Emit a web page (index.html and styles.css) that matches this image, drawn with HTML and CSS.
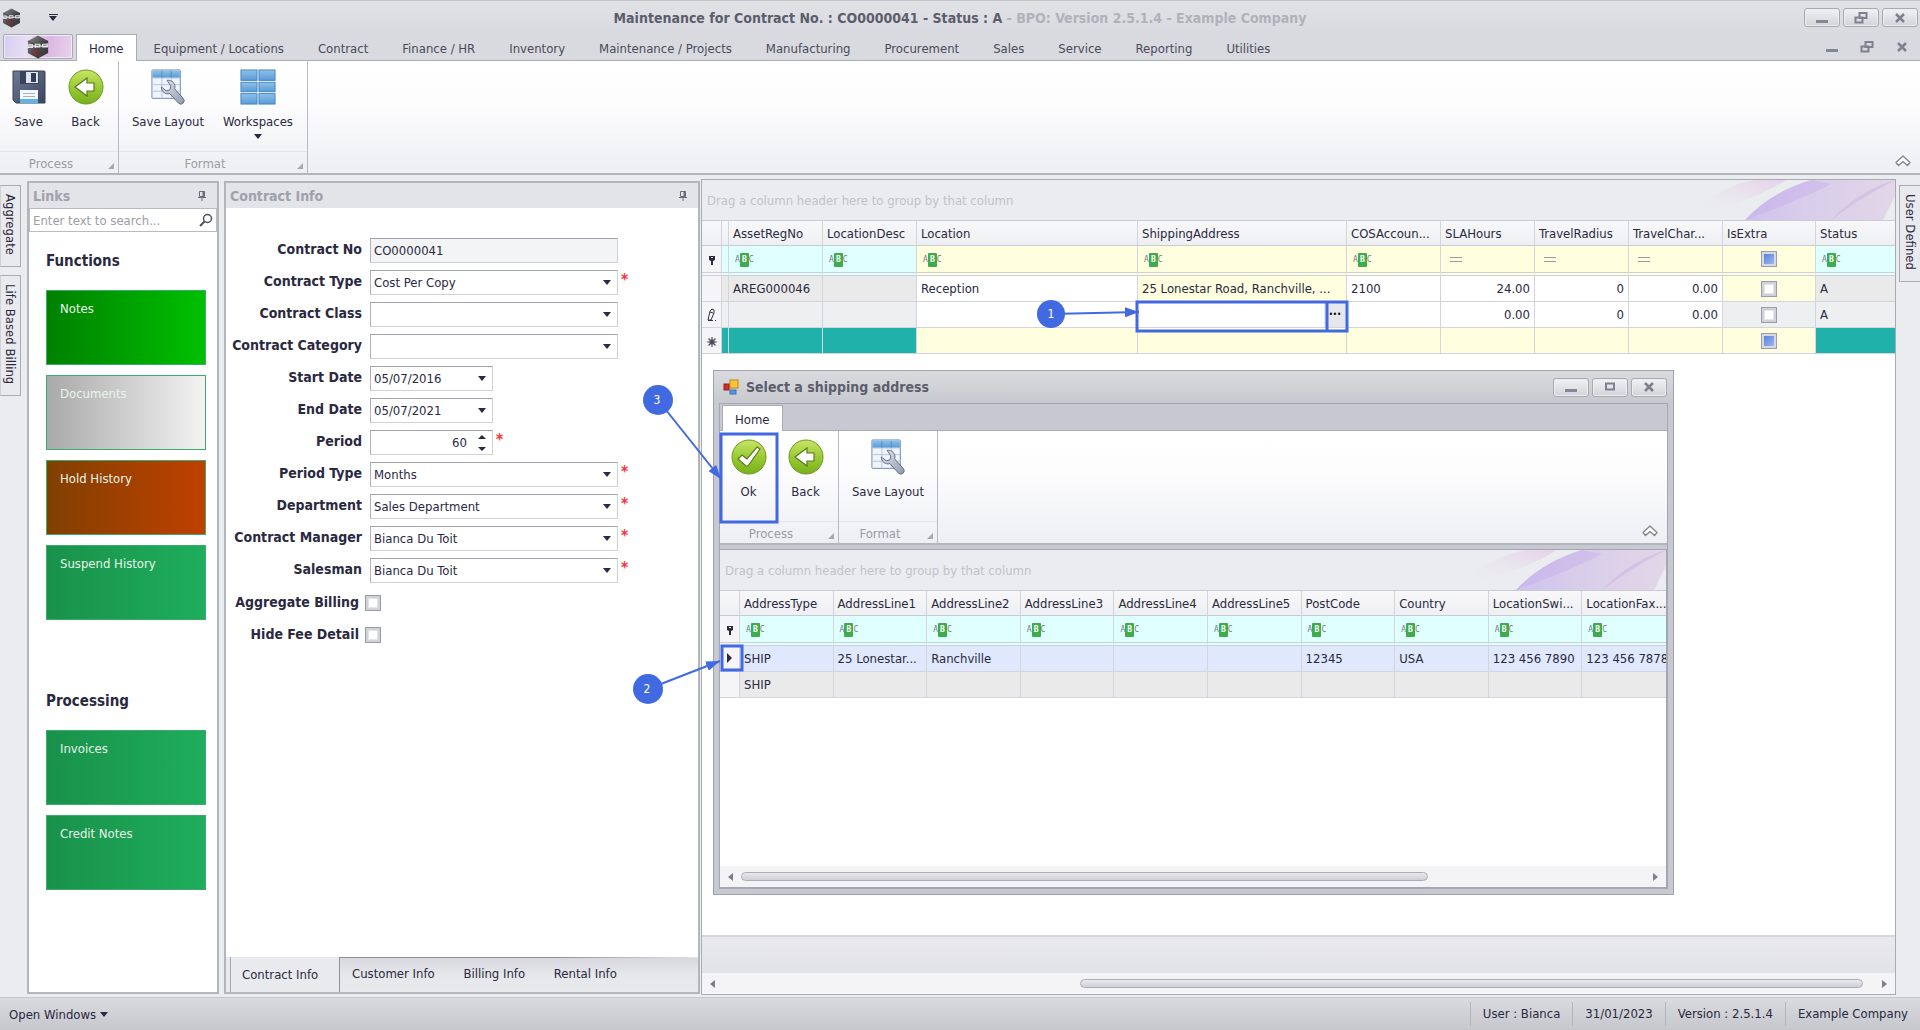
FILE: index.html
```html
<!DOCTYPE html>
<html lang="en">

<head>
  <meta charset="UTF-8">
  <meta name="viewport" content="width=device-width, initial-scale=1.0">
  <title>Maintenance for Contract No. : CO0000041</title>
  <link rel="stylesheet" href="styles.css">
</head>

<body>
  <!-- shared icons -->
  <svg class="sprite" aria-hidden="true">
    <defs>
      <linearGradient id="g-green" x1="0" y1="0" x2="0" y2="1">
        <stop offset="0" stop-color="#c9e468" />
        <stop offset="0.5" stop-color="#9acb32" />
        <stop offset="1" stop-color="#78b01c" />
      </linearGradient>
      <linearGradient id="g-blue" x1="0" y1="0" x2="0" y2="1">
        <stop offset="0" stop-color="#8fc1ea" />
        <stop offset="1" stop-color="#5a9bd6" />
      </linearGradient>
      <linearGradient id="g-floppy" x1="0" y1="0" x2="1" y2="1">
        <stop offset="0" stop-color="#6d7b95" />
        <stop offset="1" stop-color="#3d4560" />
      </linearGradient>
      <linearGradient id="g-steel" x1="0" y1="0" x2="1" y2="1">
        <stop offset="0" stop-color="#e4e8f0" />
        <stop offset="1" stop-color="#8e99ae" />
      </linearGradient>
      <linearGradient id="g-pink" x1="0" y1="1" x2="1" y2="0">
        <stop offset="0" stop-color="#ebecef" stop-opacity="0" />
        <stop offset="1" stop-color="#e6d0ea" />
      </linearGradient>
      <linearGradient id="g-violet" x1="0" y1="0" x2="1" y2="0">
        <stop offset="0" stop-color="#cdc2ee" />
        <stop offset="0.4" stop-color="#d8cdea" />
        <stop offset="1" stop-color="#e2d6e8" />
      </linearGradient>
      <linearGradient id="g-hex" x1="0" y1="0" x2="1" y2="1">
        <stop offset="0" stop-color="#8a8a8c" />
        <stop offset="0.5" stop-color="#4b4b4e" />
        <stop offset="1" stop-color="#333336" />
      </linearGradient>
    </defs>
    <symbol id="i-logo" viewBox="0 0 24 26">
      <path d="M12 0.5 23 6.5V19.5L12 25.5 1 19.5V6.5Z" fill="url(#g-hex)" />
      <path d="M1 6.5 12 12 23 6.5M12 12V25" stroke="#2c2c2f" fill="none" opacity="0.6" />
      <path d="M1 9.5v4h5v-3H2M9 14v-4h5v3H9M22 10h-5v3h5v-4M1 12h22" stroke="#e8e8e8" stroke-width="1.2" fill="none" />
      <circle cx="9.5" cy="18.5" r="2.5" stroke="#b3202a" fill="none" />
      <path d="m11 20 2 2" stroke="#b3202a" />
    </symbol>
    <symbol id="i-save" viewBox="0 0 36 36">
      <path d="M2 2h31a1 1 0 0 1 1 1v31H5l-3-3Z" fill="url(#g-floppy)" stroke="#39415a" />
      <path d="M9 2h19v13H9Z" fill="#39435e" />
      <path d="M15 3h12v11H15Z" fill="#dfe4ee" />
      <path d="M20 4h5v9h-5Z" fill="#343c55" />
      <path d="M9 21h18v13H9Z" fill="#f4f7fb" />
      <path d="M9 30h18v4H9Z" fill="#5fb3e8" />
      <path d="M12 24.5h12M12 27.5h12" stroke="#a9b1c1" />
    </symbol>
    <symbol id="i-back" viewBox="0 0 36 36">
      <circle cx="18" cy="18" r="17" fill="url(#g-green)" stroke="#6b9a1b" />
      <path d="M7 18 19 9v5h7v8h-7v5Z" fill="#fff" stroke="#59791d" stroke-width="1.2" />
    </symbol>
    <symbol id="i-ok" viewBox="0 0 36 36">
      <circle cx="18" cy="18" r="17" fill="url(#g-green)" stroke="#6b9a1b" />
      <path d="m7 20 4-4 5 4L26 8l3 2-12 17h-2Z" fill="#fff" stroke="#59791d" stroke-width="1.2" />
    </symbol>
    <symbol id="i-layout" viewBox="0 0 36 38">
      <rect x="1" y="1" width="30" height="30" rx="1" fill="#f0f4fb" stroke="#6a87b6" />
      <path d="M1 9.5h30M1 16.5h30M1 23.5h30M11.5 1v30M21.5 1v30" stroke="#b5c4df" />
      <path d="M1.5 1.5h29V9h-29Z" fill="url(#g-blue)" />
      <path d="M11.5 2v7M21.5 2v7" stroke="#4f8dc8" />
      <path d="M17 12a7 7 0 0 1 8 9l9 10a3 3 0 0 1-5 5l-9-10a7 7 0 0 1-9-7l5 4 4-1 1-4Z" fill="url(#g-steel)" stroke="#5f6a82" />
    </symbol>
    <symbol id="i-tiles" viewBox="0 0 38 38">
      <g fill="url(#g-blue)" stroke="#4384c2">
        <rect x="1" y="1" width="17" height="11" /><rect x="20" y="1" width="17" height="11" />
        <rect x="1" y="14" width="17" height="10" /><rect x="20" y="14" width="17" height="10" />
        <rect x="1" y="26" width="17" height="11" /><rect x="20" y="26" width="17" height="11" />
      </g>
    </symbol>
    <symbol id="i-min" viewBox="0 0 14 12"><path d="M1 8h12v3H1Z" fill="#84869a" /></symbol>
    <symbol id="i-restore" viewBox="0 0 14 12">
      <path d="M5.5 1h7v5h-7ZM1.5 5.5h7v5h-7Z" fill="none" stroke="#7d8090" stroke-width="2" />
    </symbol>
    <symbol id="i-max" viewBox="0 0 14 12"><path d="M3 2.5h8v6H3Z" fill="none" stroke="#7d8090" stroke-width="2" /></symbol>
    <symbol id="i-close" viewBox="0 0 14 12"><path d="m3 2 8 8M11 2l-8 8" stroke="#7d8090" stroke-width="2.5" /></symbol>
    <symbol id="i-pin" viewBox="0 0 10 12">
      <path d="M2.5 1.5h5v5h-5ZM1 7.5h8M5 8v3" fill="none" stroke="#6b6d7d" />
      <path d="M5.5 1h2v6h-2Z" fill="#6b6d7d" />
    </symbol>
    <symbol id="i-search" viewBox="0 0 14 14">
      <circle cx="8.5" cy="5.5" r="4" fill="none" stroke="#4d4f5e" stroke-width="1.5" />
      <path d="M5.5 8.5 1 13" stroke="#4d4f5e" stroke-width="2" />
    </symbol>
    <symbol id="i-collapse" viewBox="0 0 16 12">
      <path d="M8 1 15 7.5 12.5 10.5 8 6.5 3.5 10.5 1 7.5Z" fill="#fff" stroke="#84868f" stroke-width="1.4" stroke-linejoin="round" />
    </symbol>
    <symbol id="i-filter" viewBox="0 0 10 10">
      <path d="M2 1h6v4L6 6v4H4V6L2 5Z" fill="#2b2b3f" /><path d="M4 2.5h2" stroke="#fff" />
    </symbol>
    <symbol id="i-edit" viewBox="0 0 10 14">
      <path d="M1 12 3 3l2-2 2 1v3L4 12ZM3 4l3 1" fill="none" stroke="#33343f" /><path d="M1 12.500h5M8 12.500h1" stroke="#33343f" />
    </symbol>
    <symbol id="i-new" viewBox="0 0 10 10">
      <path d="M5 0v10M0 5h10M1.500 1.500l7 7M8.500 1.500l-7 7" stroke="#4d4e5c" stroke-width="1.2" /><circle cx="5" cy="5" r="2.5" fill="#4d4e5c" />
    </symbol>
    <symbol id="i-form" viewBox="0 0 16 16">
      <rect x="7" y="1" width="8" height="8" fill="#ffc52e" stroke="#b9851a" />
      <rect x="1" y="5" width="5" height="6" fill="#d02f25" stroke="#96211a" />
      <rect x="7" y="11" width="6" height="4" fill="#5a94e0" stroke="#3a70bd" />
    </symbol>
    <symbol id="i-petals" viewBox="0 0 240 40">
      <path d="M38 32Q70 4 100 0h31Q90 26 38 32Z" fill="url(#g-pink)" />
      <path d="M90 40Q116 12 156 0h84v16l-12 24Z" fill="url(#g-violet)" />
      <path d="M90 40Q116 12 156 0l20 4Q150 18 90 40Z" fill="#c3abeb" opacity="0.4" />
      <path d="M176 40Q205 10 240 0 205 18 176 40Z" fill="#c9a8dd" opacity="0.4" />
    </symbol>
  </svg>

  <header class="titlebar">
    <div class="title-left">
      <svg class="logo-small"><use href="#i-logo" /></svg>
      <span class="quick-arrow"></span>
    </div>
    <h1 class="title">Maintenance for Contract No. : CO0000041 - Status : A <span>- BPO: Version 2.5.1.4 - Example Company</span></h1>
    <div class="window-buttons">
      <button aria-label="Minimize"><svg><use href="#i-min" /></svg></button>
      <button aria-label="Restore"><svg><use href="#i-restore" /></svg></button>
      <button aria-label="Close"><svg><use href="#i-close" /></svg></button>
    </div>
  </header>

  <nav class="menu">
    <button class="app-button" aria-label="Application menu"><svg><use href="#i-logo" /></svg></button>
    <a class="menu-item is-active" href="#">Home</a>
    <a class="menu-item" href="#">Equipment / Locations</a>
    <a class="menu-item" href="#">Contract</a>
    <a class="menu-item" href="#">Finance / HR</a>
    <a class="menu-item" href="#">Inventory</a>
    <a class="menu-item" href="#">Maintenance / Projects</a>
    <a class="menu-item" href="#">Manufacturing</a>
    <a class="menu-item" href="#">Procurement</a>
    <a class="menu-item" href="#">Sales</a>
    <a class="menu-item" href="#">Service</a>
    <a class="menu-item" href="#">Reporting</a>
    <a class="menu-item" href="#">Utilities</a>
    <div class="child-buttons">
      <button aria-label="Minimize child"><svg><use href="#i-min" /></svg></button>
      <button aria-label="Restore child"><svg><use href="#i-restore" /></svg></button>
      <button aria-label="Close child"><svg><use href="#i-close" /></svg></button>
    </div>
  </nav>

  <section class="ribbon">
    <div class="ribbon-group">
      <div class="ribbon-items">
        <button class="ribbon-button"><svg><use href="#i-save" /></svg>Save</button>
        <button class="ribbon-button"><svg><use href="#i-back" /></svg>Back</button>
      </div>
      <div class="ribbon-caption">Process</div>
    </div>
    <div class="ribbon-group">
      <div class="ribbon-items roomy">
        <button class="ribbon-button wide"><svg><use href="#i-layout" /></svg>Save Layout</button>
        <button class="ribbon-button wide"><svg><use href="#i-tiles" /></svg>Workspaces<i class="caret"></i></button>
      </div>
      <div class="ribbon-caption">Format</div>
    </div>
    <button class="collapse" aria-label="Collapse ribbon"><svg><use href="#i-collapse" /></svg></button>
  </section>

  <main class="workspace">
    <div class="rail">
      <button class="rail-tab">Aggregate</button>
      <button class="rail-tab">Life Based Billing</button>
    </div>

    <aside class="panel links">
      <div class="panel-header">Links <svg><use href="#i-pin" /></svg></div>
      <div class="search">
        <input type="text" placeholder="Enter text to search..." aria-label="Search links">
        <svg><use href="#i-search" /></svg>
      </div>
      <div class="tiles">
        <h2>Functions</h2>
        <button class="tile notes">Notes</button>
        <button class="tile documents">Documents</button>
        <button class="tile hold">Hold History</button>
        <button class="tile">Suspend History</button>
      </div>
      <div class="tiles">
        <h2>Processing</h2>
        <button class="tile">Invoices</button>
        <button class="tile">Credit Notes</button>
      </div>
    </aside>

    <section class="panel contract">
      <div class="panel-header">Contract Info <svg><use href="#i-pin" /></svg></div>
      <form class="form">
        <label for="no">Contract No</label>
        <div class="field"><input id="no" type="text" value="CO0000041" readonly></div>
        <label for="type">Contract Type</label>
        <div class="field drop required"><select id="type"><option>Cost Per Copy</option></select></div>
        <label for="class">Contract Class</label>
        <div class="field drop"><select id="class"><option></option></select></div>
        <label for="category">Contract Category</label>
        <div class="field drop"><select id="category"><option></option></select></div>
        <label for="start">Start Date</label>
        <div class="field drop short"><input id="start" type="text" value="05/07/2016"></div>
        <label for="end">End Date</label>
        <div class="field drop short"><input id="end" type="text" value="05/07/2021"></div>
        <label for="period">Period</label>
        <div class="field drop spin short required"><input id="period" type="text" value="60"></div>
        <label for="ptype">Period Type</label>
        <div class="field drop required"><select id="ptype"><option>Months</option></select></div>
        <label for="dept">Department</label>
        <div class="field drop required"><select id="dept"><option>Sales Department</option></select></div>
        <label for="manager">Contract Manager</label>
        <div class="field drop required"><select id="manager"><option>Bianca Du Toit</option></select></div>
        <label for="salesman">Salesman</label>
        <div class="field drop required"><select id="salesman"><option>Bianca Du Toit</option></select></div>
        <div class="check-row"><label for="aggregate">Aggregate Billing</label><input id="aggregate" type="checkbox"></div>
        <div class="check-row"><label for="hidefee">Hide Fee Detail</label><input id="hidefee" type="checkbox"></div>
      </form>
      <div class="bottom-tabs">
        <button class="is-active">Contract Info</button>
        <div class="rest">
          <button>Customer Info</button>
          <button>Billing Info</button>
          <button>Rental Info</button>
        </div>
      </div>
    </section>

    <section class="grid">
      <div class="group-bar">Drag a column header here to group by that column<svg><use href="#i-petals" /></svg></div>
      <table class="table">
        <colgroup>
          <col class="c-ind"><col class="c-thin"><col class="c-std"><col class="c-std"><col class="c-loc"><col class="c-ship">
          <col class="c-std"><col class="c-std"><col class="c-std"><col class="c-std"><col class="c-extra"><col>
        </colgroup>
        <thead>
          <tr>
            <th></th><th></th><th>AssetRegNo</th><th>LocationDesc</th><th>Location</th><th>ShippingAddress</th>
            <th>COSAccoun...</th><th>SLAHours</th><th>TravelRadius</th><th>TravelChar...</th><th>IsExtra</th><th>Status</th>
          </tr>
          <tr class="filter">
            <td class="ind"><svg><use href="#i-filter" /></svg></td>
            <td></td>
            <td><span class="abc">A<b>B</b>C</span></td>
            <td><span class="abc">A<b>B</b>C</span></td>
            <td class="yellow"><span class="abc">A<b>B</b>C</span></td>
            <td class="yellow"><span class="abc">A<b>B</b>C</span></td>
            <td class="yellow"><span class="abc">A<b>B</b>C</span></td>
            <td class="yellow"><span class="eq"></span></td>
            <td class="yellow"><span class="eq"></span></td>
            <td class="yellow"><span class="eq"></span></td>
            <td class="yellow center"><input class="mixed" type="checkbox" aria-label="Filter IsExtra"></td>
            <td><span class="abc">A<b>B</b>C</span></td>
          </tr>
        </thead>
        <tbody>
          <tr>
            <td class="ind"></td><td class="grey"></td><td class="grey">AREG000046</td><td class="grey"></td>
            <td>Reception</td><td class="yellow">25 Lonestar Road, Ranchville, ...</td><td>2100</td>
            <td class="num">24.00</td><td class="num">0</td><td class="num">0.00</td>
            <td class="yellow center"><input type="checkbox" aria-label="IsExtra"></td><td class="grey">A</td>
          </tr>
          <tr>
            <td class="ind"><svg class="tall"><use href="#i-edit" /></svg></td><td class="pale"></td><td class="pale"></td><td class="pale"></td>
            <td></td>
            <td class="editing"><div><input type="text" aria-label="ShippingAddress"><button aria-label="Choose address">•••</button></div></td>
            <td></td><td class="num">0.00</td><td class="num">0</td><td class="num">0.00</td>
            <td class="pale center"><input type="checkbox" aria-label="IsExtra"></td><td class="pale">A</td>
          </tr>
          <tr>
            <td class="ind"><svg><use href="#i-new" /></svg></td><td class="teal"></td><td class="teal"></td><td class="teal"></td>
            <td class="yellow"></td><td class="yellow"></td><td class="yellow"></td><td class="yellow"></td><td class="yellow"></td><td class="yellow"></td>
            <td class="yellow center"><input class="mixed" type="checkbox" aria-label="IsExtra"></td><td class="teal"></td>
          </tr>
        </tbody>
      </table>
      <div class="grid-space"></div>
      <div class="grid-footer"></div>
      <div class="scrollbar main-scroll"><i class="left"></i><span class="track"><b></b></span><i class="right"></i></div>

      <section class="dialog" role="dialog" aria-label="Select a shipping address">
        <header class="dialog-title">
          <svg class="form-icon"><use href="#i-form" /></svg>
          <h2>Select a shipping address</h2>
          <div class="window-buttons">
            <button aria-label="Minimize dialog"><svg><use href="#i-min" /></svg></button>
            <button aria-label="Maximize dialog"><svg><use href="#i-max" /></svg></button>
            <button aria-label="Close dialog"><svg><use href="#i-close" /></svg></button>
          </div>
        </header>
        <div class="dialog-body">
          <nav class="dialog-menu"><a class="menu-item is-active" href="#">Home</a></nav>
          <div class="ribbon">
            <div class="ribbon-group">
              <div class="ribbon-items">
                <button class="ribbon-button"><svg><use href="#i-ok" /></svg>Ok</button>
                <button class="ribbon-button"><svg><use href="#i-back" /></svg>Back</button>
              </div>
              <div class="ribbon-caption">Process</div>
            </div>
            <div class="ribbon-group">
              <div class="ribbon-items roomy">
                <button class="ribbon-button wide"><svg><use href="#i-layout" /></svg>Save Layout</button>
              </div>
              <div class="ribbon-caption">Format</div>
            </div>
            <button class="collapse" aria-label="Collapse dialog ribbon"><svg><use href="#i-collapse" /></svg></button>
          </div>
          <div class="dialog-grid">
            <div class="group-bar">Drag a column header here to group by that column<svg><use href="#i-petals" /></svg></div>
            <div class="clip">
              <table class="table addresses">
                <colgroup>
                  <col class="c-ind"><col><col><col><col><col><col><col><col><col><col>
                </colgroup>
                <thead>
                  <tr>
                    <th></th><th>AddressType</th><th>AddressLine1</th><th>AddressLine2</th><th>AddressLine3</th><th>AddressLine4</th>
                    <th>AddressLine5</th><th>PostCode</th><th>Country</th><th>LocationSwi...</th><th>LocationFax...</th>
                  </tr>
                  <tr class="filter">
                    <td class="ind"><svg><use href="#i-filter" /></svg></td>
                    <td><span class="abc">A<b>B</b>C</span></td>
                    <td><span class="abc">A<b>B</b>C</span></td>
                    <td><span class="abc">A<b>B</b>C</span></td>
                    <td><span class="abc">A<b>B</b>C</span></td>
                    <td><span class="abc">A<b>B</b>C</span></td>
                    <td><span class="abc">A<b>B</b>C</span></td>
                    <td><span class="abc">A<b>B</b>C</span></td>
                    <td><span class="abc">A<b>B</b>C</span></td>
                    <td><span class="abc">A<b>B</b>C</span></td>
                    <td><span class="abc">A<b>B</b>C</span></td>
                  </tr>
                </thead>
                <tbody>
                  <tr class="selected">
                    <td class="ind"><i class="row-arrow"></i></td><td>SHIP</td><td>25 Lonestar...</td><td>Ranchville</td><td></td><td></td>
                    <td></td><td>12345</td><td>USA</td><td>123 456 7890</td><td>123 456 7878</td>
                  </tr>
                  <tr class="muted">
                    <td class="ind"></td><td>SHIP</td><td></td><td></td><td></td><td></td><td></td><td></td><td></td><td></td><td></td>
                  </tr>
                </tbody>
              </table>
            </div>
            <div class="grid-space"></div>
            <div class="scrollbar"><i class="left"></i><span class="track"><b></b></span><i class="right"></i></div>
          </div>
        </div>
      </section>

    </section>

    <div class="rail rail-right">
      <button class="rail-tab">User Defined</button>
    </div>
  </main>

  <footer class="status">
    <button class="open-windows">Open Windows <i class="caret"></i></button>
    <span>User : Bianca</span>
    <span>31/01/2023</span>
    <span>Version : 2.5.1.4</span>
    <span>Example Company</span>
  </footer>

  <!-- numbered steps drawn over the window -->
  <svg class="steps" width="1920" height="1030">
    <defs>
      <marker id="arrow" viewBox="0 0 14 10" refX="14" refY="5" markerWidth="14" markerHeight="10" markerUnits="userSpaceOnUse" orient="auto">
        <path d="M0 0 14 5 0 10Z" fill="#4169e1" />
      </marker>
    </defs>
    <g fill="none" stroke="#4169e1" stroke-width="3">
      <rect x="1137" y="302" width="210" height="29" />
      <path d="M1327 303v27" />
      <rect x="721" y="434" width="56" height="88" />
      <rect x="722" y="646" width="20" height="24" />
    </g>
    <g stroke="#4169e1" stroke-width="2">
      <path d="M1051 314 1139 312" marker-end="url(#arrow)" />
      <path d="M658 400 721 479" marker-end="url(#arrow)" />
      <path d="M648 689 720 661" marker-end="url(#arrow)" />
    </g>
    <g fill="#4169e1">
      <circle cx="1051" cy="314" r="14" />
      <circle cx="658" cy="400" r="15" />
      <circle cx="648" cy="689" r="15" />
    </g>
    <g fill="#fff" text-anchor="middle">
      <text x="1051" y="318">1</text>
      <text x="657" y="404">3</text>
      <text x="647" y="693">2</text>
    </g>
  </svg>
</body>

</html>
```

FILE: styles.css
```css
* {
  margin: 0;
  padding: 0;
  box-sizing: border-box;
}

body {
  position: relative;
  display: flex;
  flex-direction: column;
  height: 100vh;
  overflow: hidden;
  background: #ebecf0;
  color: #2a2940;
  font-family: "DejaVu Sans Condensed", Tahoma, sans-serif;
  font-size: 13px;
}

button,
input,
select {
  border: 0;
  background: none;
  color: inherit;
  font: inherit;
}

a {
  color: inherit;
  text-decoration: none;
}

.sprite {
  position: absolute;
  width: 0;
  height: 0;
}

/* title bar */
.titlebar {
  display: grid;
  grid-template-columns: 1fr auto 1fr;
  align-items: center;
  height: 34px;
  padding: 0 2px;
  border-top: 1px solid #c3c4ca;
  background: linear-gradient(#e1e2e6, #d9dadf);
}

.title-left {
  display: flex;
  align-items: center;
  gap: 28px;
}

.logo-small {
  width: 19px;
  height: 20px;
}

.quick-arrow {
  width: 9px;
  height: 7px;
  border-top: 1px solid #2a2940;
}

.quick-arrow::after,
.caret {
  content: '';
  display: block;
  width: 0;
  border: 4px solid transparent;
  border-top: 5px solid #2a2940;
  border-bottom: 0;
}

.quick-arrow::after {
  margin-top: 1px;
}

.title {
  color: #5c5d6c;
  font-size: 14px;
}

.title span {
  color: #b0b1ba;
}

.window-buttons {
  display: flex;
  justify-self: end;
  gap: 3px;
}

.window-buttons button {
  display: flex;
  align-items: center;
  justify-content: center;
  width: 36px;
  height: 19px;
  border: 1px solid #a8aab3;
  border-radius: 3px;
  background: linear-gradient(#f0f1f3, #d3d4d9);
  box-shadow: inset 0 0 0 1px #eceded;
}

.window-buttons svg,
.child-buttons svg {
  display: block;
  width: 14px;
  height: 12px;
}

/* menu */
.menu {
  display: flex;
  height: 27px;
  border-bottom: 1px solid #a9acb5;
  background: #d9dadf;
}

.app-button {
  width: 70px;
  height: 25px;
  margin: 0 3px;
  border: 1px solid #a8a9b5;
  border-radius: 2px;
  background: linear-gradient(100deg, #d5cdf3, #e9dff2 35%, #dcb8e2 65%, #e6d3ea);
  box-shadow: inset 0 0 0 1px #f0eaf6;
}

.app-button svg {
  display: block;
  width: 24px;
  height: 24px;
  margin: auto;
}

.menu-item {
  padding: 0 17px;
  color: #4a4a5c;
  line-height: 29px;
}

.menu-item.is-active {
  height: 27px;
  padding: 0 12px;
  border: 1px solid #a9acb5;
  border-bottom: 0;
  background: #fff;
  color: #2a2940;
  line-height: 27px;
}

.child-buttons {
  display: flex;
  align-items: center;
  gap: 21px;
  margin: 0 11px 0 auto;
}

/* ribbon */
.ribbon {
  display: flex;
  height: 114px;
  border-bottom: 2px solid #b3b5bd;
  background: linear-gradient(#fff, #fdfdfe 35%, #eeeff3);
}

.ribbon-group {
  display: flex;
  flex-direction: column;
  border-right: 1px solid #b8bac3;
}

.ribbon-items {
  display: flex;
  flex: 1;
  padding-right: 4px;
}

.ribbon-items.roomy {
  padding-left: 4px;
}

.ribbon-button {
  display: flex;
  flex-direction: column;
  align-items: center;
  width: 57px;
  padding-top: 8px;
  line-height: 17px;
}

.ribbon-button.wide {
  width: 90px;
}

.ribbon-button svg {
  width: 36px;
  height: 36px;
  margin-bottom: 8px;
}

.ribbon-button .caret {
  margin-top: 4px;
}

.ribbon-caption {
  position: relative;
  height: 22px;
  padding-right: 16px;
  border-top: 1px solid #e3e4e8;
  color: #9a9ba6;
  line-height: 23px;
  text-align: center;
}

.ribbon-caption::after {
  content: '';
  position: absolute;
  right: 4px;
  bottom: 4px;
  border: 3px solid #a7a8af;
  border-top-color: transparent;
  border-left-color: transparent;
}

.collapse {
  align-self: flex-end;
  margin: 0 9px 6px auto;
}

.collapse svg {
  display: block;
  width: 16px;
  height: 12px;
}

/* main area */
.workspace {
  display: flex;
  flex: 1;
  min-height: 0;
}

.rail {
  display: flex;
  flex-direction: column;
  gap: 8px;
  width: 22px;
  margin-right: 5px;
  padding-top: 10px;
}

.rail-right {
  width: 21px;
  margin: 0 0 0 3px;
}

.rail-tab {
  width: 21px;
  padding: 8px 0 11px;
  border: 1px solid #a9abb4;
  border-left-color: #d0d1d8;
  background: #e9eaee;
  line-height: 19px;
  writing-mode: vertical-rl;
}

.rail-right .rail-tab {
  border-left-color: #a9abb4;
  border-right: 0;
}

.panel {
  display: flex;
  flex-direction: column;
  margin: 6px 5px 3px 0;
  border: 2px solid #b3b5bd;
  background: #fff;
}

.panel-header {
  display: flex;
  align-items: center;
  justify-content: space-between;
  height: 25px;
  padding: 0 10px 0 4px;
  background: #e3e4e8;
  color: #a0a1ad;
  font-size: 14px;
  font-weight: bold;
}

.panel-header svg {
  width: 10px;
  height: 12px;
}

.links {
  width: 192px;
}

.search {
  display: flex;
  align-items: center;
  height: 24px;
  padding-right: 3px;
  border: 1px solid #b9bac3;
}

.search input {
  flex: 1;
  min-width: 0;
  padding-left: 3px;
}

.search input::placeholder {
  color: #9c9da9;
}

.search svg {
  width: 14px;
  height: 14px;
}

.tiles {
  display: flex;
  flex-direction: column;
  gap: 10px;
  padding: 19px 11px 52px 17px;
}

.tiles h2 {
  margin-bottom: 9px;
  font-size: 15px;
  line-height: 20px;
}

.tile {
  display: flex;
  height: 75px;
  padding: 9px 13px;
  border: 1px solid #3cab6c;
  background: linear-gradient(90deg, #19914a, #1eae5c);
  color: #e9f5ec;
  line-height: 18px;
}

.notes {
  background: linear-gradient(90deg, #008000, #00c000);
}

.documents {
  background: linear-gradient(90deg, #a9a9a9, #f3f3f3);
}

.hold {
  background: linear-gradient(90deg, #804000, #c04000);
}

/* contract form */
.contract {
  width: 476px;
  margin-right: 1px;
}

.form {
  display: grid;
  grid-template-columns: 136px 1fr;
  column-gap: 8px;
  row-gap: 7px;
  align-content: start;
  flex: 1;
  padding-top: 30px;
}

.form label {
  font-size: 14px;
  font-weight: bold;
  line-height: 23px;
  text-align: right;
  white-space: nowrap;
}

.field {
  position: relative;
  width: 248px;
  height: 25px;
}

.field.short {
  width: 123px;
}

.field input,
.field select {
  width: 100%;
  height: 25px;
  padding: 0 3px;
  border: 1px solid #cfd0d8;
  border-top-color: #9fa1ad;
  border-left-color: #b0b2bc;
  background: #fff;
  appearance: none;
}

.field input[readonly] {
  background: #f3f4f6;
}

.drop::before {
  content: '';
  position: absolute;
  top: 10px;
  right: 7px;
  border: 4px solid transparent;
  border-top: 5px solid #2a2940;
  border-bottom: 0;
}

.spin input {
  padding-right: 25px;
  text-align: right;
}

/* up and down arrows in one shape */
.spin::before {
  top: 5px;
  width: 8px;
  height: 16px;
  border: 0;
  background: #2a2940;
  clip-path: polygon(50% 0, 100% 4px, 0 4px, 50% 0, 0 12px, 100% 12px, 50% 100%, 0 12px);
}

.required::after {
  content: '*';
  position: absolute;
  top: 1px;
  left: calc(100% + 3px);
  color: #f33;
  font-size: 15px;
  font-weight: bold;
}

.check-row {
  display: flex;
  grid-column: 1 / 3;
  align-items: center;
  gap: 6px;
  height: 25px;
}

.check-row label {
  width: 133px;
}

input[type="checkbox"] {
  width: 16px;
  height: 16px;
  border: 1px solid #9a9ca9;
  background: #fff;
  box-shadow: inset 0 0 0 2px #d0d1d9, inset 0 0 0 3px #e4e5ea;
  appearance: none;
}

input[type="checkbox"].mixed {
  background: linear-gradient(135deg, #4a78d8, #a8c2f5);
  box-shadow: inset 0 0 0 2px #d9dae1;
}

.bottom-tabs {
  display: flex;
  height: 35px;
  padding-left: 4px;
  background: #e9eaee;
}

.bottom-tabs button {
  padding: 0 13px 0 12px;
  line-height: 32px;
}

.bottom-tabs .is-active {
  width: 109px;
  padding: 0 0 0 11px;
  border-left: 1px solid #a9abb4;
  text-align: left;
}

.bottom-tabs .rest {
  flex: 1;
  border: 1px solid;
  border-image: linear-gradient(100deg, #8f919b 60%, #e9eaee) 1;
  border-right: 0;
  border-bottom: 0;
  background: linear-gradient(#d7d8dd, #e6e7eb 50%, #e9eaee);
}

/* data grid */
.grid {
  position: relative;
  display: flex;
  flex: 1;
  flex-direction: column;
  min-width: 0;
  margin: 4px 0 2px;
  border: 1px solid #a9abb4;
  background: #fff;
}

.group-bar {
  display: flex;
  align-items: center;
  justify-content: space-between;
  height: 40px;
  padding-left: 5px;
  background: #ebecef;
  color: #c1c2cb;
}

.group-bar svg {
  width: 240px;
  height: 40px;
}

.table {
  width: 100%;
  border-spacing: 0;
  table-layout: fixed;
}

.c-ind {
  width: 20px;
}

.c-thin {
  width: 7px;
}

.c-std {
  width: 94px;
}

.c-extra {
  width: 93px;
}

.c-loc {
  width: 221px;
}

.c-ship {
  width: 209px;
}

.table th,
.table td {
  height: 26px;
  padding: 0 4px;
  border-right: 1px solid #d4d5dc;
  border-bottom: 1px solid #d4d5dc;
  font-weight: normal;
  text-align: left;
  white-space: nowrap;
}

.table th {
  border-top: 1px solid #c9cad2;
  border-bottom-color: #c9cad2;
  background: linear-gradient(#f8f8fa, #eeeff2);
}

.table tr > :last-child {
  border-right: 0;
}

.table .filter td {
  height: 30px;
  border-bottom: 4px double #cfd0d7;
  background: #e0ffff;
}

.table .ind,
.table .filter .ind {
  padding: 0;
  background: #f5f5f8;
  text-align: center;
}

.ind svg {
  width: 10px;
  height: 10px;
  vertical-align: middle;
}

.ind .tall {
  height: 14px;
}

.table .yellow,
.table .filter .yellow {
  background: #ffffe0;
}

.table .grey,
.muted td {
  background: #eaeaea;
}

.table .pale {
  background: #eeeff1;
}

.table .teal {
  background: #20b2aa;
}

.table .num {
  text-align: right;
}

.table .center {
  text-align: center;
}

.center input {
  vertical-align: middle;
}

.selected td {
  background: #e0e8fd;
}

.row-arrow {
  display: inline-block;
  border: 5px solid transparent;
  border-left-color: #2a2940;
  border-right: 0;
}

.abc {
  display: inline-flex;
  align-items: center;
  margin-left: 2px;
  color: #76777f;
  font-family: "DejaVu Sans Mono", monospace;
  font-size: 8px;
  vertical-align: middle;
}

.abc b {
  width: 9px;
  border-radius: 1px;
  background: #3fac4b;
  color: #fff;
  line-height: 14px;
  text-align: center;
}

.eq {
  display: block;
  width: 12px;
  height: 5px;
  margin-left: 5px;
  border: 1px solid #9a9ba3;
  border-right: 0;
  border-left: 0;
}

.table .editing {
  padding: 0;
}

.editing div {
  display: flex;
  height: 24px;
}

.editing input {
  flex: 1;
  min-width: 0;
}

.editing button {
  width: 22px;
  background: #e6e7eb;
  color: #000;
  font-size: 8px;
}

.grid-space {
  flex: 1;
}

.grid-footer {
  height: 38px;
  border-top: 2px solid #d6d7dc;
  background: linear-gradient(#eaeaee, #e2e3e7);
}

.scrollbar {
  display: flex;
  align-items: center;
  height: 21px;
  padding: 0 8px;
  background: #f4f4f6;
}

.scrollbar i {
  border: 4px solid transparent;
}

.scrollbar .left {
  border-right: 5px solid #7c7e8b;
  border-left: 0;
}

.scrollbar .right {
  border-right: 0;
  border-left: 5px solid #7c7e8b;
}

.track {
  flex: 1;
  height: 9px;
  margin: 0 8px;
}

.track b {
  display: block;
  width: 76%;
  height: 9px;
  border: 1px solid #acaeb7;
  border-radius: 5px;
  background: linear-gradient(#e9e9ed, #cfd0d6);
}

.main-scroll .track b {
  width: 68%;
  margin: 0 1% 0 auto;
}

/* dialog */
.dialog {
  position: absolute;
  top: 190px;
  left: 11px;
  display: flex;
  flex-direction: column;
  width: 961px;
  height: 525px;
  padding: 0 5px 5px;
  border: 1px solid #9fa1ae;
  background: #c7c8d1;
}

.dialog-title {
  display: flex;
  align-items: center;
  height: 32px;
  margin: 0 -5px;
  padding: 0 6px 0 9px;
  background: linear-gradient(#dadbdf, #c8c9ce);
}

.dialog-title h2 {
  flex: 1;
  margin-left: 7px;
  color: #5c5d6c;
  font-size: 14px;
}

.form-icon {
  width: 16px;
  height: 16px;
}

.dialog-body {
  display: flex;
  flex: 1;
  flex-direction: column;
  border: 1px solid #a4a6b1;
}

.dialog-menu {
  display: flex;
  height: 27px;
  padding: 1px 0 0 2px;
  border-bottom: 1px solid #a9acb5;
}

.dialog-grid {
  display: flex;
  flex: 1;
  flex-direction: column;
  margin-top: 4px;
  border: 1px solid #a4a6b1;
  border-left: 0;
  background: #fff;
}

.clip {
  overflow: hidden;
}

.addresses {
  width: 956px;
}

/* status bar */
.status {
  display: flex;
  align-items: center;
  height: 33px;
  border-top: 1px solid #c6c7cd;
  background: linear-gradient(#dadbdf, #c6c7cd);
}

.status span {
  padding: 0 12px;
  border-left: 1px solid #b3b4bc;
  line-height: 24px;
}

.open-windows {
  display: flex;
  align-items: center;
  gap: 4px;
  margin: 0 auto 0 9px;
}

.steps {
  position: absolute;
  top: 0;
  left: 0;
  font-size: 12px;
  pointer-events: none;
}
```
